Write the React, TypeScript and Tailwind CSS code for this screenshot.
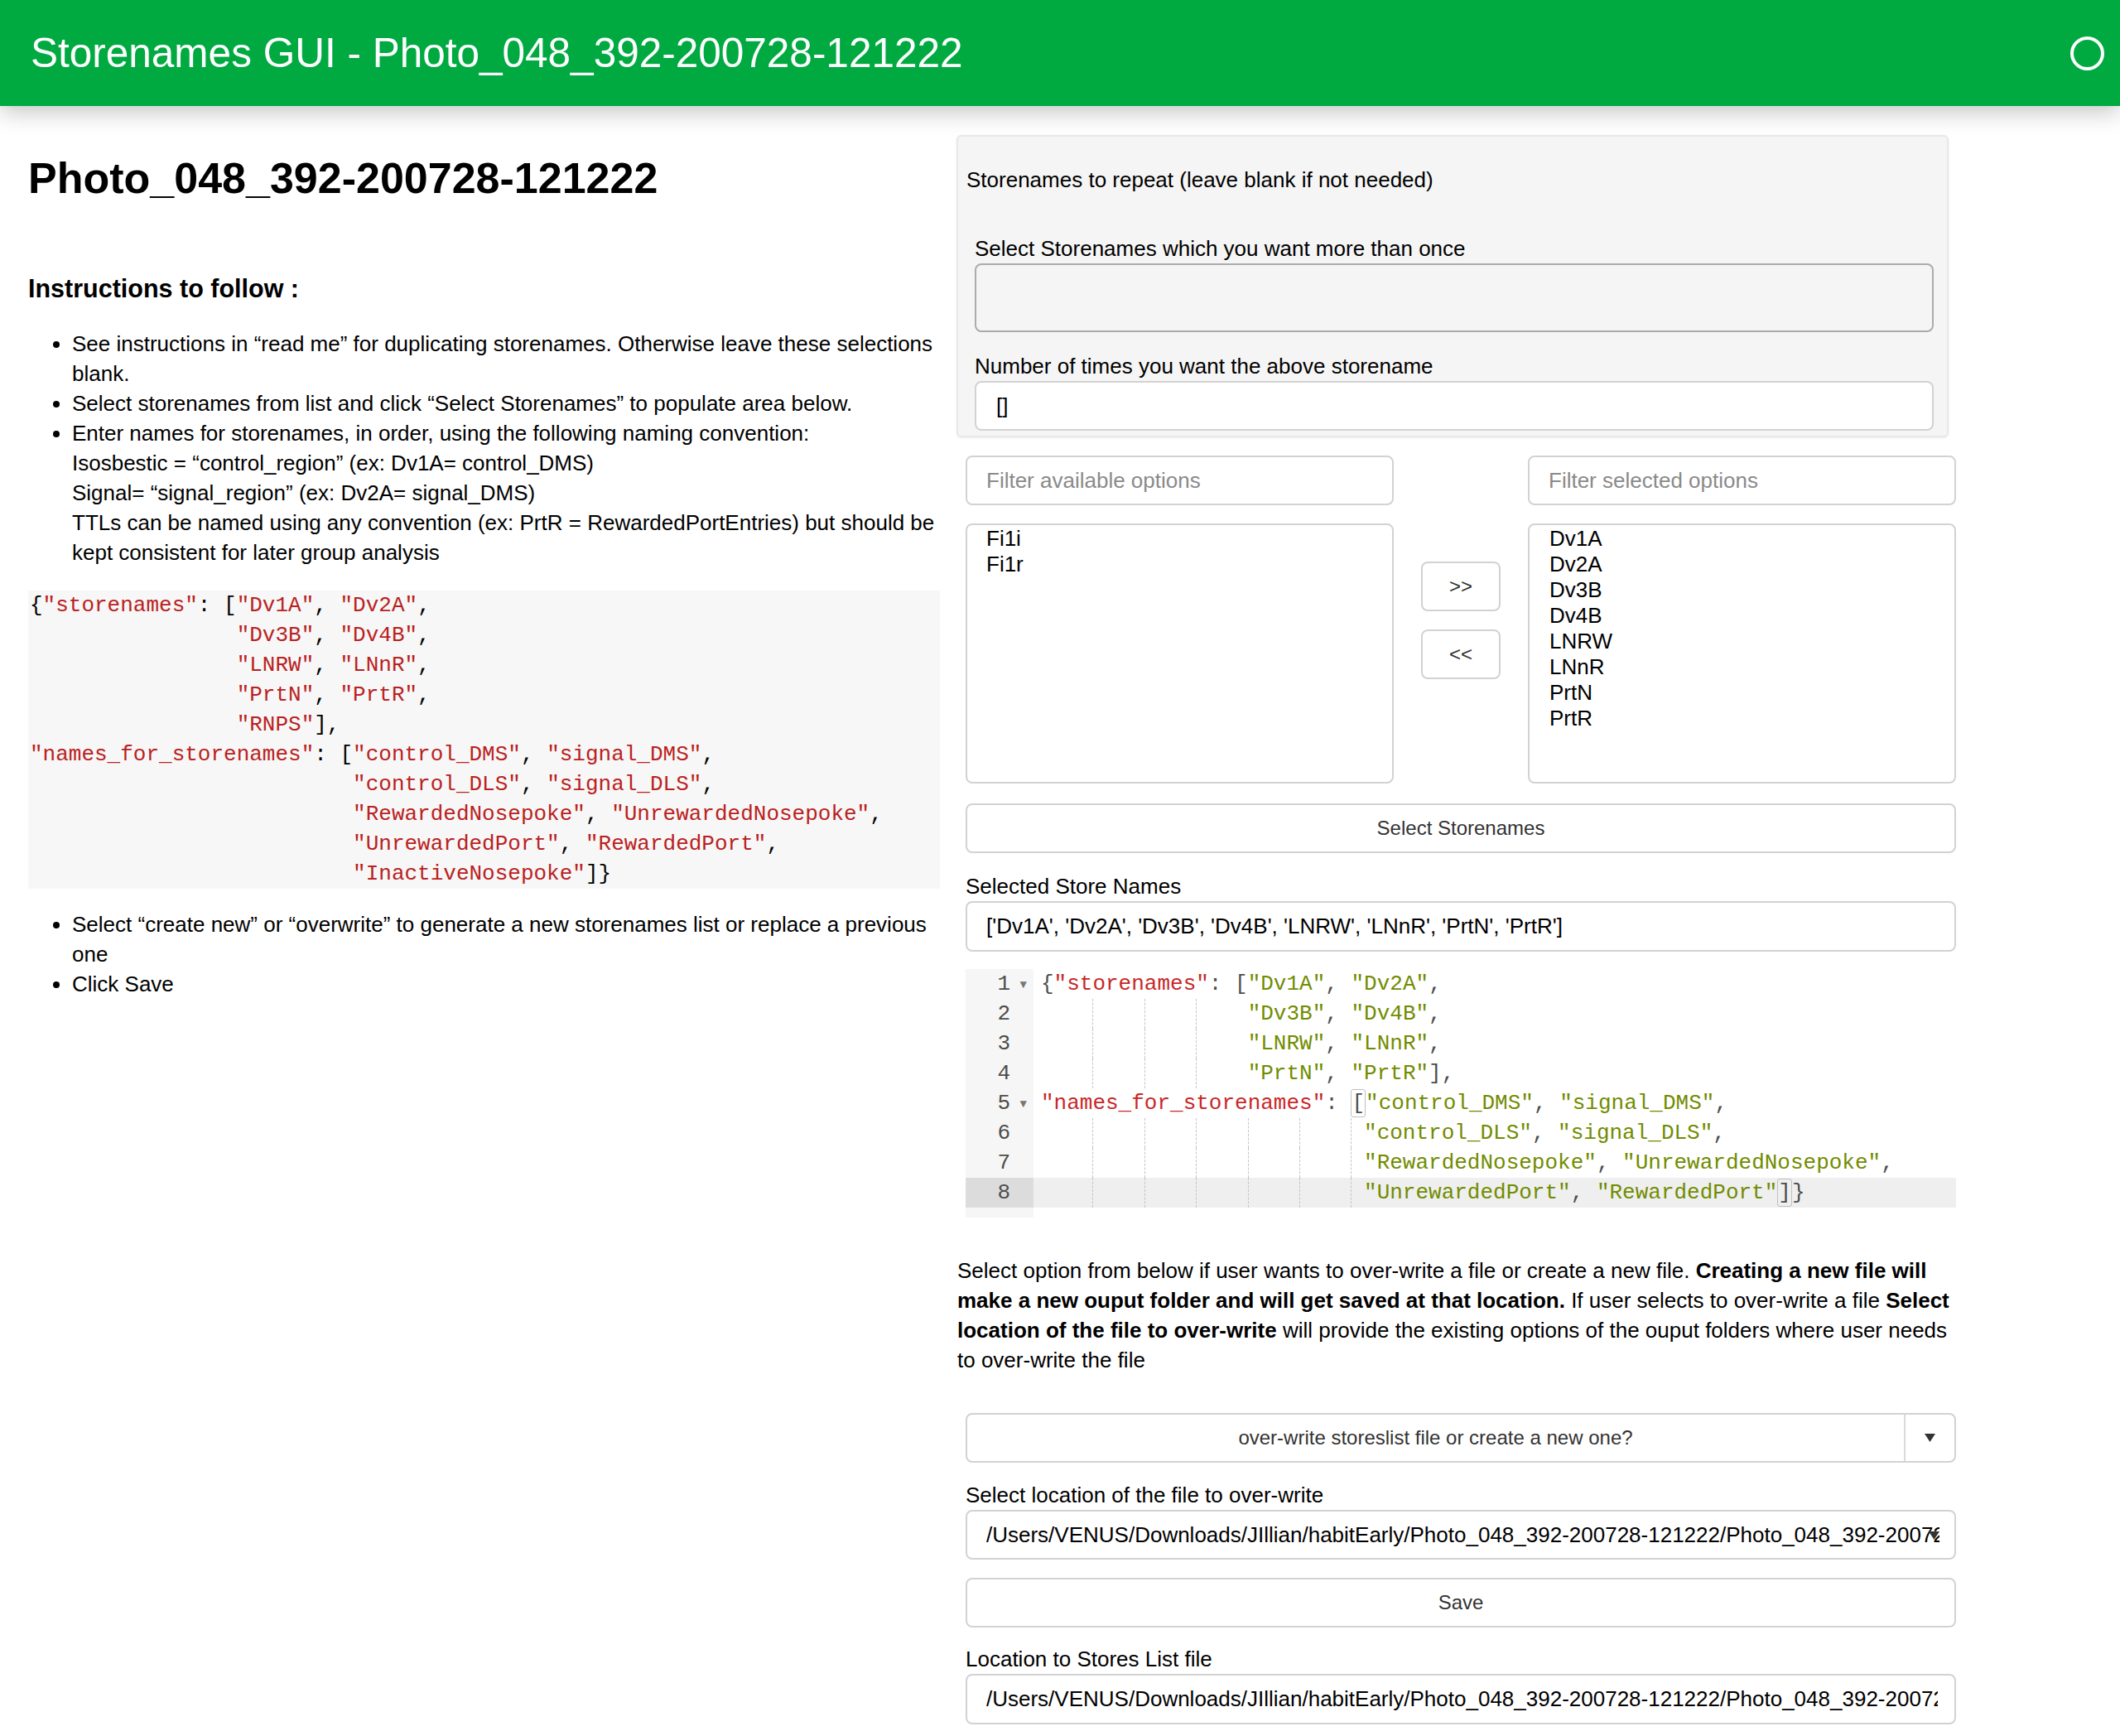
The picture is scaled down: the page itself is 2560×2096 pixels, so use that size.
import React from 'react';

type Tok = { t: string; c: 'k' | 's' | 'p' | 'b' };

const codeLeft = [
  '{"storenames": ["Dv1A", "Dv2A",',
  '                "Dv3B", "Dv4B",',
  '                "LNRW", "LNnR",',
  '                "PrtN", "PrtR",',
  '                "RNPS"],',
  '"names_for_storenames": ["control_DMS", "signal_DMS",',
  '                         "control_DLS", "signal_DLS",',
  '                         "RewardedNosepoke", "UnrewardedNosepoke",',
  '                         "UnrewardedPort", "RewardedPort",',
  '                         "InactiveNosepoke"]}',
];

// split a line of the left code block into strings and punctuation
const RedLine = ({ line }: { line: string }) => {
  const parts = line.split(/("[^"]*")/);
  return (
    <div className="h-[36px] whitespace-pre">
      {parts.map((p, i) =>
        p.startsWith('"') ? (
          <span key={i} className="text-[#ba2121]">{p}</span>
        ) : (
          <span key={i}>{p}</span>
        )
      )}
    </div>
  );
};

const editorLines: { guides: number; tail?: boolean; fold?: boolean; toks: Tok[] }[] = [
  {
    guides: 0,
    fold: true,
    toks: [
      { t: '{', c: 'p' },
      { t: '"storenames"', c: 'k' },
      { t: ': [', c: 'p' },
      { t: '"Dv1A"', c: 's' },
      { t: ', ', c: 'p' },
      { t: '"Dv2A"', c: 's' },
      { t: ',', c: 'p' },
    ],
  },
  { guides: 3, toks: [{ t: '"Dv3B"', c: 's' }, { t: ', ', c: 'p' }, { t: '"Dv4B"', c: 's' }, { t: ',', c: 'p' }] },
  { guides: 3, toks: [{ t: '"LNRW"', c: 's' }, { t: ', ', c: 'p' }, { t: '"LNnR"', c: 's' }, { t: ',', c: 'p' }] },
  { guides: 3, toks: [{ t: '"PrtN"', c: 's' }, { t: ', ', c: 'p' }, { t: '"PrtR"', c: 's' }, { t: '],', c: 'p' }] },
  {
    guides: 0,
    fold: true,
    toks: [
      { t: '"names_for_storenames"', c: 'k' },
      { t: ': ', c: 'p' },
      { t: '[', c: 'b' },
      { t: '"control_DMS"', c: 's' },
      { t: ', ', c: 'p' },
      { t: '"signal_DMS"', c: 's' },
      { t: ',', c: 'p' },
    ],
  },
  { guides: 5, tail: true, toks: [{ t: '"control_DLS"', c: 's' }, { t: ', ', c: 'p' }, { t: '"signal_DLS"', c: 's' }, { t: ',', c: 'p' }] },
  {
    guides: 5,
    tail: true,
    toks: [{ t: '"RewardedNosepoke"', c: 's' }, { t: ', ', c: 'p' }, { t: '"UnrewardedNosepoke"', c: 's' }, { t: ',', c: 'p' }],
  },
  {
    guides: 5,
    tail: true,
    toks: [{ t: '"UnrewardedPort"', c: 's' }, { t: ', ', c: 'p' }, { t: '"RewardedPort"', c: 's' }, { t: ']', c: 'b' }, { t: '}', c: 'p' }],
  },
];

const tokClass = {
  k: 'text-[#c82829]',
  s: 'text-[#718c00]',
  p: 'text-[#4d4d4c]',
  b: 'text-[#4d4d4c] border border-[#c0c0c0] rounded-[3px]',
};

const Caret = () => (
  <svg width="13" height="10" viewBox="0 0 13 10">
    <path d="M0 0 L13 0 L6.5 10 Z" fill="#333" />
  </svg>
);

const field = 'border-2 border-[#d2d2d2] rounded-[8px] bg-white';

export default function App() {
  return (
    <div className="w-[2560px] h-[2096px] overflow-hidden bg-white text-black font-['Liberation_Sans',Arial,sans-serif]">
      <header className="relative z-10 h-[128px] bg-[#00aa41] flex items-center justify-between pl-[37px] pr-[19px] shadow-[0_8px_26px_rgba(0,0,0,0.22)]">
        <div className="text-white text-[49.5px] leading-none">Storenames GUI - Photo_048_392-200728-121222</div>
        <div className="w-[41px] h-[41px] rounded-full border-[4px] border-white" />
      </header>

      <div className="flex pl-[34px]">
        {/* left column */}
        <div className="w-[1101px] shrink-0">
          <h1 className="mt-[57px] text-[52px] leading-[60px] font-bold">Photo_048_392-200728-121222</h1>
          <h3 className="mt-[85px] text-[30.5px] leading-[36px] font-bold">Instructions to follow :</h3>
          <ul className="mt-[31px] list-disc pl-[53px] text-[26px] leading-[36px] whitespace-nowrap">
            <li>
              See instructions in “read me” for duplicating storenames. Otherwise leave these selections
              <br />
              blank.
            </li>
            <li>Select storenames from list and click “Select Storenames” to populate area below.</li>
            <li>
              Enter names for storenames, in order, using the following naming convention:
              <br />
              Isosbestic = “control_region” (ex: Dv1A= control_DMS)
              <br />
              Signal= “signal_region” (ex: Dv2A= signal_DMS)
              <br />
              TTLs can be named using any convention (ex: PrtR = RewardedPortEntries) but should be
              <br />
              kept consistent for later group analysis
            </li>
          </ul>
          <pre className="mt-[28px] bg-[#f7f7f7] pl-[2px] text-[26px] leading-[36px] font-['Liberation_Mono',monospace]">
            {codeLeft.map((l, i) => (
              <RedLine key={i} line={l} />
            ))}
          </pre>
          <ul className="mt-[25px] list-disc pl-[53px] text-[26px] leading-[36px] whitespace-nowrap">
            <li>
              Select “create new” or “overwrite” to generate a new storenames list or replace a previous
              <br />
              one
            </li>
            <li>Click Save</li>
          </ul>
        </div>

        {/* right column */}
        <div className="ml-[20px] w-[1207px] shrink-0 text-[26px]">
          <div className="mt-[35px] w-[1198px] bg-[#f5f5f5] border-2 border-[#e8e8e8] rounded-[6px] shadow-[0_1px_3px_rgba(0,0,0,0.08)] pt-[34px] pb-[6px] pl-[10px] pr-[16px]">
            <div className="leading-[36px]">Storenames to repeat (leave blank if not needed)</div>
            <div className="pl-[10px] mt-[47px]">
              <div className="leading-[36px]">Select Storenames which you want more than once</div>
              <div className="h-[83px] border-2 border-[#ababab] rounded-[8px] bg-[#f5f5f5]" />
              <div className="mt-[23px] leading-[36px]">Number of times you want the above storename</div>
              <div className={`${field} h-[60px] flex items-center pl-[24px]`}>[]</div>
            </div>
          </div>

          <div className="ml-[11px] w-[1196px]">
            <div className="mt-[22px] flex justify-between">
              <div className={`${field} w-[517px] h-[60px] flex items-center pl-[23px] text-[#8a8a8a]`}>Filter available options</div>
              <div className={`${field} w-[517px] h-[60px] flex items-center pl-[23px] text-[#8a8a8a]`}>Filter selected options</div>
            </div>
            <div className="mt-[22px] flex justify-between">
              <div className={`${field} w-[517px] h-[314px] pl-[23px] pt-[1px] leading-[31px]`}>
                <div>Fi1i</div>
                <div>Fi1r</div>
              </div>
              <div className="pt-[46px] flex flex-col gap-[22px]">
                <div className={`${field} w-[96px] h-[60px] flex items-center justify-center text-[24px] text-[#333]`}>&gt;&gt;</div>
                <div className={`${field} w-[96px] h-[60px] flex items-center justify-center text-[24px] text-[#333]`}>&lt;&lt;</div>
              </div>
              <div className={`${field} w-[517px] h-[314px] pl-[24px] pt-[1px] leading-[31px]`}>
                {['Dv1A', 'Dv2A', 'Dv3B', 'Dv4B', 'LNRW', 'LNnR', 'PrtN', 'PrtR'].map((s) => (
                  <div key={s}>{s}</div>
                ))}
              </div>
            </div>

            <div className={`${field} mt-[24px] h-[60px] flex items-center justify-center text-[24px] text-[#333]`}>Select Storenames</div>

            <div className="mt-[22px] leading-[36px]">Selected Store Names</div>
            <div className={`${field} h-[61px] flex items-center pl-[23px]`}>['Dv1A', 'Dv2A', 'Dv3B', 'Dv4B', 'LNRW', 'LNnR', 'PrtN', 'PrtR']</div>

            {/* ace editor */}
            <div className="mt-[21px] h-[300px] font-['Liberation_Mono',monospace] text-[26px] leading-[36px] bg-white">
              {editorLines.map((ln, i) => {
                const active = i === editorLines.length - 1;
                return (
                  <div key={i} className={`flex h-[36px] ${active ? 'bg-[#efefef]' : ''}`}>
                    <div className={`relative w-[82px] shrink-0 text-right pr-[28px] text-[#4d4d4c] ${active ? 'bg-[#dcdcdc]' : 'bg-[#f6f6f6]'}`}>
                      {i + 1}
                      {ln.fold && <span className="absolute right-[8px] top-[1px] text-[14px] text-[#777]">▼</span>}
                    </div>
                    <div className="pl-[9px] whitespace-pre flex">
                      {ln.guides > 0 && <span className="inline-block w-[4ch] h-[36px]" />}
                      {Array.from({ length: ln.guides }).map((_, g) => (
                        <span key={g} className="inline-block w-[4ch] h-[36px] border-l border-dashed border-[#c4c4c4]" />
                      ))}
                      {ln.tail && <span className="inline-block w-[1ch] h-[36px] border-l border-dashed border-[#c4c4c4]" />}
                      {ln.toks.map((t, j) => (
                        <span key={j} className={`${tokClass[t.c]} ${t.c === 'b' ? 'h-[34px] self-center leading-[32px]' : ''}`}>
                          {t.t}
                        </span>
                      ))}
                    </div>
                  </div>
                );
              })}
              <div className="w-[82px] h-[12px] bg-[#f6f6f6]" />
            </div>
          </div>

          <p className="mt-[46px] pl-[1px] leading-[36px] whitespace-nowrap">
            Select option from below if user wants to over-write a file or create a new file. <b>Creating a new file will</b>
            <br />
            <b>make a new ouput folder and will get saved at that location.</b> If user selects to over-write a file <b>Select</b>
            <br />
            <b>location of the file to over-write</b> will provide the existing options of the ouput folders where user needs
            <br />
            to over-write the file
          </p>

          <div className="ml-[11px] w-[1196px]">
            <div className={`${field} mt-[46px] h-[60px] flex text-[24px] text-[#333]`}>
              <div className="flex-1 flex items-center justify-center">over-write storeslist file or create a new one?</div>
              <div className="w-[61px] border-l-2 border-[#dadada] flex items-center justify-center">
                <Caret />
              </div>
            </div>

            <div className="mt-[21px] leading-[36px]">Select location of the file to over-write</div>
            <div className={`${field} relative h-[60px] flex items-center pl-[23px] pr-[18px] overflow-hidden`}>
              <span className="whitespace-nowrap overflow-hidden">
                /Users/VENUS/Downloads/JIllian/habitEarly/Photo_048_392-200728-121222/Photo_048_392-200728-121222/storesList.csv
              </span>
              <span className="absolute right-[18px] top-[24px]">
                <Caret />
              </span>
            </div>

            <div className={`${field} mt-[22px] h-[60px] flex items-center justify-center text-[24px] text-[#333]`}>Save</div>

            <div className="mt-[20px] leading-[36px]">Location to Stores List file</div>
            <div className={`${field} h-[61px] flex items-center pl-[23px] pr-[20px] overflow-hidden`}>
              <span className="whitespace-nowrap overflow-hidden">
                /Users/VENUS/Downloads/JIllian/habitEarly/Photo_048_392-200728-121222/Photo_048_392-200728-121222/storesList.csv
              </span>
            </div>
          </div>
        </div>
      </div>
    </div>
  );
}
